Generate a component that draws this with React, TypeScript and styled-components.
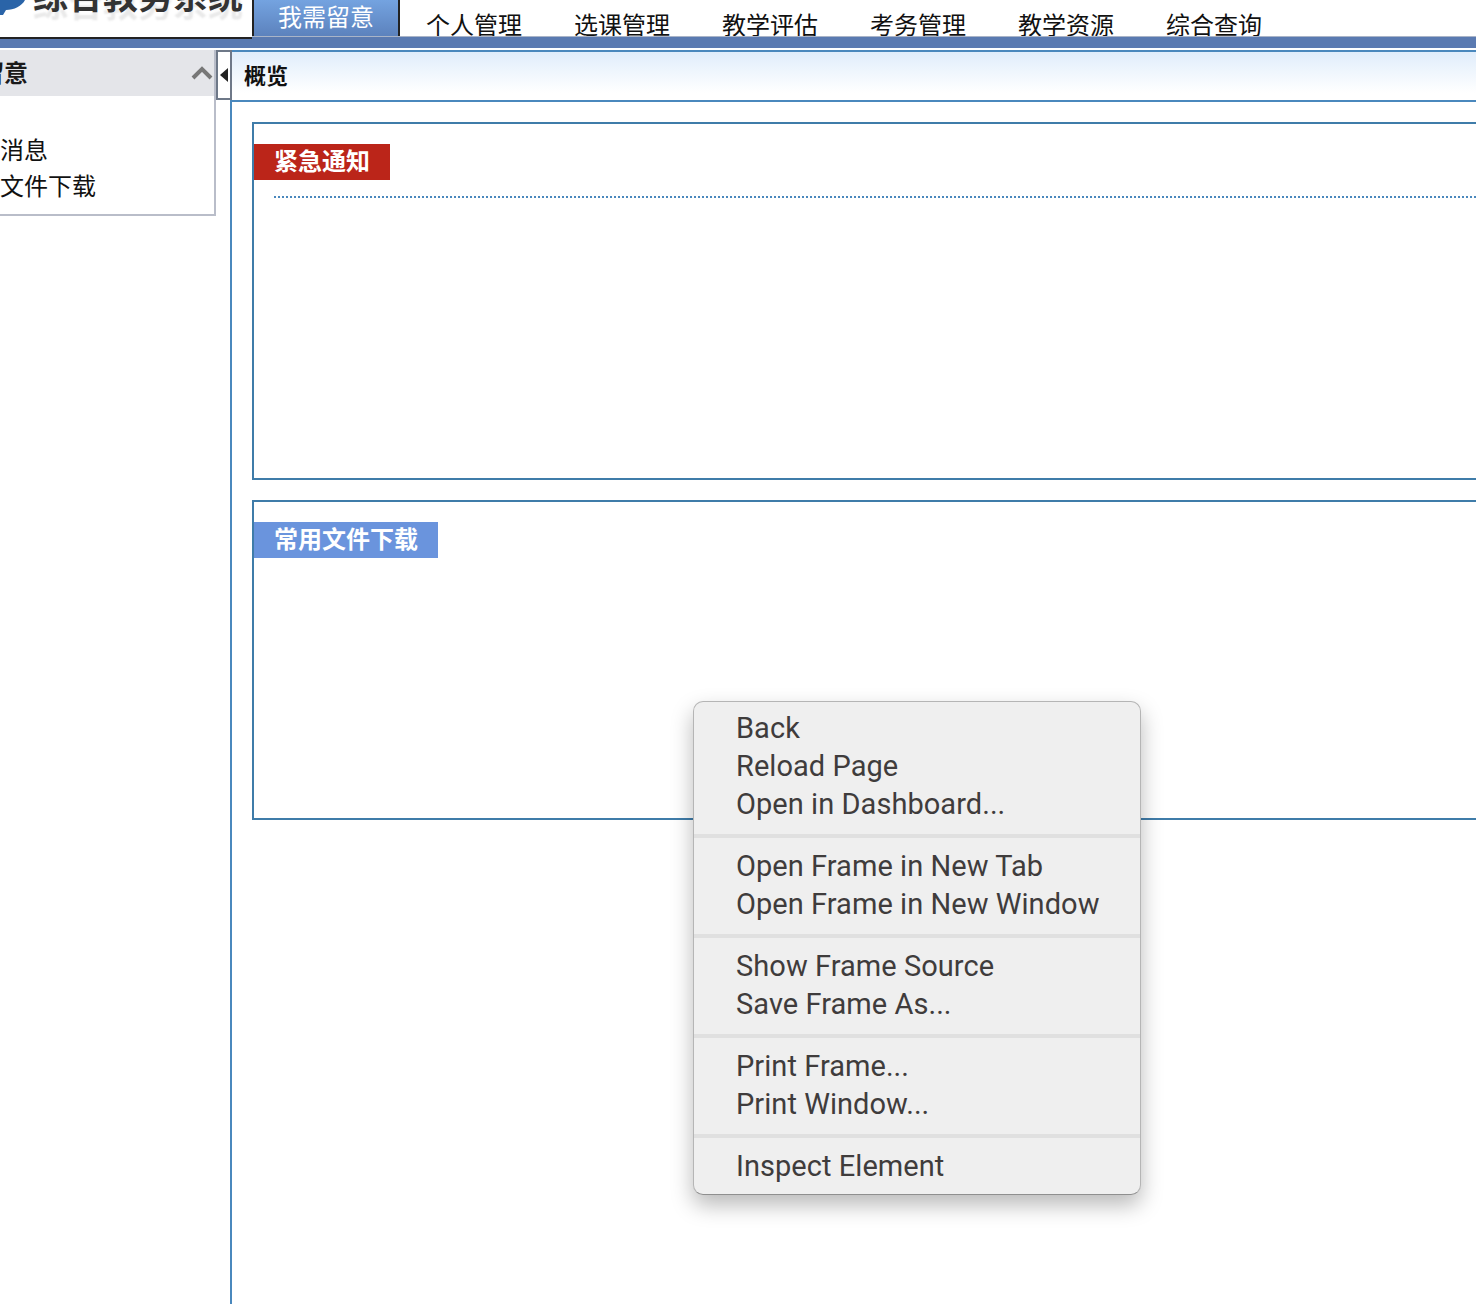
import React from 'react';
import styled, { createGlobalStyle } from 'styled-components';

const CJK = '"Noto Sans CJK SC", "Liberation Sans", sans-serif';

const GlobalStyle = createGlobalStyle`
  html, body {
    margin: 0;
    padding: 0;
    background: #fff;
    overflow: hidden;
  }
  body {
    font-family: ${CJK};
  }
`;

const Page = styled.div`
  position: relative;
  width: 1476px;
  height: 1304px;
  overflow: hidden;
  display: flex;
  flex-direction: column;
`;

const TopBar = styled.div`
  display: flex;
  height: 36px;
  align-items: stretch;
`;

const LogoBox = styled.div`
  position: relative;
  z-index: 1;
  width: 252px;
  height: 39px;
  box-sizing: border-box;
  background: #fff;
  border-bottom: 2px solid #222;
  overflow: hidden;
  display: flex;
`;

const LogoMark = styled.svg`
  width: 25px;
  height: 16px;
  flex-shrink: 0;
`;

const LogoText = styled.div`
  margin: -28px 0 0 8px;
  font-size: 35px;
  line-height: 44px;
  font-weight: 700;
  color: #333;
  white-space: nowrap;
  text-shadow: 0 8px 2px rgba(120, 120, 120, 0.16);
`;

const ActiveTab = styled.div`
  width: 144px;
  background: linear-gradient(#74a3e0, #5c82bd);
  border-right: 2px solid #222;
  border-left: 2px solid #222;
  color: #fff;
  font-size: 24px;
  line-height: 32px;
  text-align: center;
`;

const NavList = styled.div`
  display: flex;
  gap: 52px;
  margin-left: 26px;
`;

const NavItem = styled.div`
  font-size: 24px;
  line-height: 48px;
  height: 36px;
  overflow: hidden;
  color: #111;
  white-space: nowrap;
`;

const BlueBar = styled.div`
  height: 12px;
  box-sizing: border-box;
  border-top: 1px solid #a9b4c8;
  background: #5a7ab1;
`;

const Body = styled.div`
  display: flex;
  flex: 1;
  margin-top: 2px;
  min-height: 0;
`;

const Sidebar = styled.div`
  width: 216px;
  height: 166px;
  box-sizing: border-box;
  border-right: 2px solid #b9bdc9;
  border-bottom: 2px solid #b9bdc9;
  overflow: hidden;
`;

const SideHead = styled.div`
  height: 46px;
  background: #e4e5e9;
  display: flex;
  align-items: center;
  justify-content: space-between;
`;

const SideTitle = styled.div`
  margin: -4px 0 0 -20px;
  font-size: 24px;
  font-weight: 700;
  color: #1a1a1a;
`;

const SideList = styled.div`
  padding-top: 35px;
`;

const SideItem = styled.div`
  font-size: 24px;
  line-height: 36px;
  color: #111;
  white-space: nowrap;
`;

const Toggle = styled.div`
  position: relative;
  z-index: 1;
  width: 16px;
  height: 50px;
  box-sizing: border-box;
  border: 2px solid #6e7888;
  background: #fff;
  display: flex;
  align-items: center;
  padding-left: 2px;
`;

const Main = styled.div`
  flex: 1;
  min-width: 0;
  margin-left: -2px;
  border-left: 2px solid #4a88bd;
  border-top: 2px solid #4a88bd;
  display: flex;
  flex-direction: column;
`;

const TitleBar = styled.div`
  height: 48px;
  border-bottom: 2px solid #4a88bd;
  background: linear-gradient(#e0edfb, #fff 85%);
  padding-left: 12px;
  font-size: 22px;
  font-weight: 700;
  line-height: 44px;
  color: #111;
`;

const Content = styled.div`
  padding: 20px 0 0 20px;
  display: flex;
  flex-direction: column;
  gap: 20px;
`;

const Card = styled.div<{ $height: number }>`
  width: 1300px;
  height: ${(p) => p.$height}px;
  box-sizing: border-box;
  border: 2px solid #3f7ca9;
  padding-top: 20px;
`;

const Tag = styled.div<{ $bg: string; $width: number }>`
  width: ${(p) => p.$width}px;
  height: 36px;
  box-sizing: border-box;
  padding-left: 20px;
  background: ${(p) => p.$bg};
  color: #fff;
  font-size: 24px;
  font-weight: 700;
  line-height: 31px;
  white-space: nowrap;
`;

const DottedRule = styled.div`
  height: 2px;
  margin: 16px 0 0 20px;
  background: repeating-linear-gradient(90deg, #4a88bd 0 2px, transparent 2px 4px);
`;

const Menu = styled.div`
  position: absolute;
  left: 693px;
  top: 701px;
  width: 448px;
  height: 494px;
  box-sizing: border-box;
  padding: 7px 0 8px;
  background: #efefef;
  border: 1px solid #b5b5b5;
  border-bottom-color: #8f8f8f;
  border-radius: 10px;
  box-shadow: 0 10px 22px rgba(0, 0, 0, 0.28);
  font-family: Roboto, "Liberation Sans", sans-serif;
  font-size: 29px;
  letter-spacing: 0.05px;
  color: #3f3c3c;
`;

const MenuItem = styled.div`
  height: 38px;
  line-height: 38px;
  padding-left: 42px;
  white-space: nowrap;
`;

const MenuSeparator = styled.div`
  height: 4px;
  margin: 11px 0 9px;
  background: #e0e0e0;
`;

const navItems = ['个人管理', '选课管理', '教学评估', '考务管理', '教学资源', '综合查询'];

const menuGroups = [
  ['Back', 'Reload Page', 'Open in Dashboard...'],
  ['Open Frame in New Tab', 'Open Frame in New Window'],
  ['Show Frame Source', 'Save Frame As...'],
  ['Print Frame...', 'Print Window...'],
  ['Inspect Element'],
];

export default function App() {
  return (
    <Page>
      <GlobalStyle />
      <TopBar>
        <LogoBox>
          <LogoMark viewBox="0 0 25 16">
            <path d="M0 0h25C22 6 14 10 6 10L3 15H0z" fill="#2a64a8" />
          </LogoMark>
          <LogoText>综合教务系统</LogoText>
        </LogoBox>
        <ActiveTab>我需留意</ActiveTab>
        <NavList>
          {navItems.map((item) => (
            <NavItem key={item}>{item}</NavItem>
          ))}
        </NavList>
      </TopBar>
      <BlueBar />
      <Body>
        <Sidebar>
          <SideHead>
            <SideTitle>留意</SideTitle>
            <svg width="24" height="16" viewBox="0 0 24 16">
              <path d="M3 13l9-9 9 9" fill="none" stroke="#777" strokeWidth="4" />
            </svg>
          </SideHead>
          <SideList>
            <SideItem>消息</SideItem>
            <SideItem>文件下载</SideItem>
          </SideList>
        </Sidebar>
        <Toggle>
          <svg width="8" height="14" viewBox="0 0 8 14">
            <path d="M8 0v14L0 7z" fill="#222" />
          </svg>
        </Toggle>
        <Main>
          <TitleBar>概览</TitleBar>
          <Content>
            <Card $height={358}>
              <Tag $bg="#bb2519" $width={136}>紧急通知</Tag>
              <DottedRule />
            </Card>
            <Card $height={320}>
              <Tag $bg="#6a94dd" $width={184}>常用文件下载</Tag>
            </Card>
          </Content>
        </Main>
      </Body>
      <Menu>
        {menuGroups.map((group, i) => (
          <React.Fragment key={group[0]}>
            {i > 0 && <MenuSeparator />}
            {group.map((item) => (
              <MenuItem key={item}>{item}</MenuItem>
            ))}
          </React.Fragment>
        ))}
      </Menu>
    </Page>
  );
}
